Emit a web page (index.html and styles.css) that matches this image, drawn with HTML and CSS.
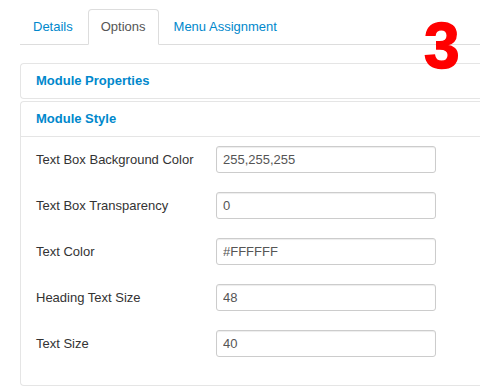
FILE: index.html
```
<!DOCTYPE html>
<html lang="en">
<head>
    <meta charset="UTF-8">
    <meta name="viewport" content="width=device-width, initial-scale=1.0">
    <title>Module Options</title>
    <link rel="stylesheet" href="styles.css">
</head>
<body>
    <ul class="tabs">
        <li><a href="#">Details</a></li>
        <li class="active"><a href="#">Options</a></li>
        <li><a href="#">Menu Assignment</a></li>
    </ul>

    <div class="step">3</div>

    <div class="accordion">
        <div class="group">
            <div class="heading"><a href="#">Module Properties</a></div>
        </div>
        <div class="group">
            <div class="heading"><a href="#">Module Style</a></div>
            <div class="body">
                <div class="row">
                    <label>Text Box Background Color</label>
                    <input type="text" value="255,255,255">
                </div>
                <div class="row">
                    <label>Text Box Transparency</label>
                    <input type="text" value="0">
                </div>
                <div class="row">
                    <label>Text Color</label>
                    <input type="text" value="#FFFFFF">
                </div>
                <div class="row">
                    <label>Heading Text Size</label>
                    <input type="text" value="48">
                </div>
                <div class="row">
                    <label>Text Size</label>
                    <input type="text" value="40">
                </div>
            </div>
        </div>
    </div>
</body>
</html>
```

FILE: styles.css
```
body {
    margin: 0;
    background: #fff;
    font-family: "Liberation Sans", Arial, sans-serif;
    font-size: 13px;
    line-height: 18px;
    color: #333;
    overflow: hidden;
}

a {
    color: #0088cc;
    text-decoration: none;
}

/* Tabs */
.tabs {
    list-style: none;
    margin: 9px 0 0 20px;
    padding: 0;
    display: flex;
    border-bottom: 1px solid #ddd;
}

.tabs li {
    margin-right: 2px;
    margin-bottom: -1px;
}

.tabs a {
    display: block;
    padding: 8px 12px;
    border: 1px solid transparent;
    border-radius: 4px 4px 0 0;
}

.tabs .active a {
    color: #555;
    background: #fff;
    border-color: #ddd #ddd transparent;
}

/* Big step number */
.step {
    position: absolute;
    left: 424px;
    top: 14px;
    font-size: 64px;
    line-height: 1;
    font-weight: bold;
    color: #ff0000;
    -webkit-text-stroke: 1.5px #ff0000;
}

/* Accordion */
.accordion {
    margin: 18px 0 0 20px;
}

.group {
    border: 1px solid #e5e5e5;
    border-right: none;
    border-radius: 4px 0 0 4px;
    margin-bottom: 2px;
}

.heading {
    padding: 8px 15px;
    font-weight: bold;
}

.body {
    border-top: 1px solid #e5e5e5;
    padding: 9px 15px 9px;
    display: flex;
    flex-direction: column;
}

.row {
    display: flex;
    align-items: center;
    margin-bottom: 19px;
}

.row label {
    width: 180px;
    color: #333;
}

.row input {
    box-sizing: border-box;
    width: 220px;
    height: 27px;
    padding: 4px 6px;
    font-family: inherit;
    font-size: 13px;
    color: #555;
    border: 1px solid #ccc;
    border-radius: 3px;
    box-shadow: inset 0 1px 1px rgba(0, 0, 0, 0.075);
}
```
